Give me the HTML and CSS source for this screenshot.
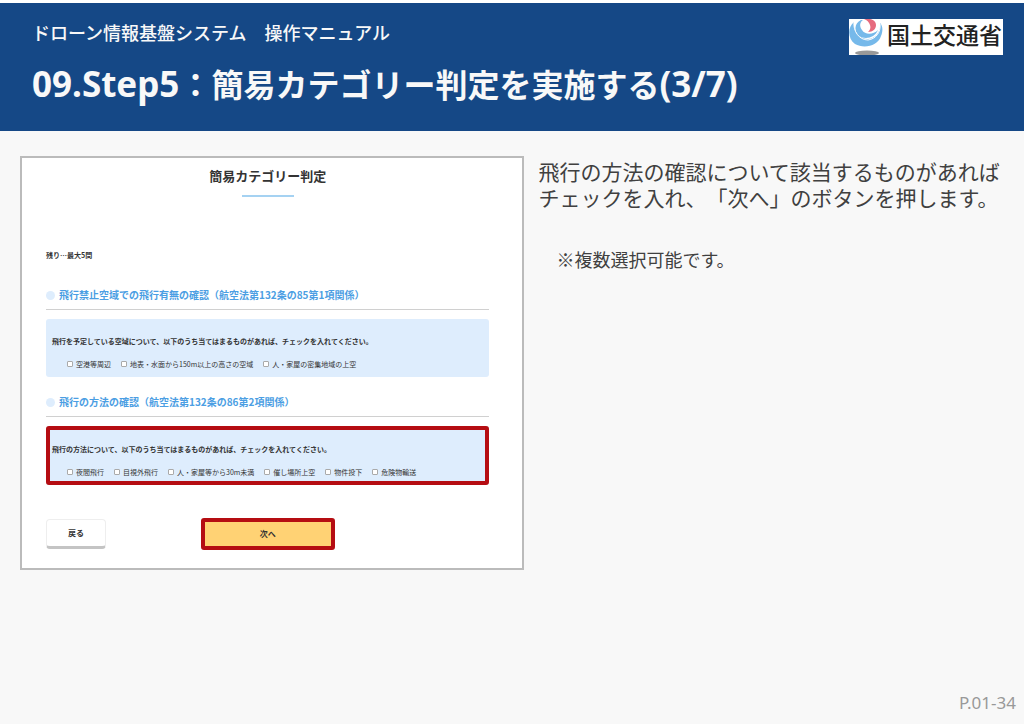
FILE: index.html
```html
<!DOCTYPE html>
<html lang="ja">
<head>
  <meta charset="UTF-8">
  <title>ドローン情報基盤システム 操作マニュアル</title>
  <link rel="stylesheet" href="styles.css">
</head>
<body>

  <header class="header">
    <div class="titles">
      <p class="manual-name">ドローン情報基盤システム　操作マニュアル</p>
      <h1><span class="latin">09.Step5</span>：簡易カテゴリー判定を実施する<span class="latin">(3/7)</span></h1>
    </div>
    <div class="logo">
      <svg viewBox="0 0 36 36" width="36" height="36" aria-hidden="true">
        <ellipse cx="18" cy="34" rx="12" ry="2.5" fill="#999"/>
        <path d="M5 3C-2 9-1 20 6 25C15 30 29 27 32 17C34 12 34 7 31 4C32 12 27 20 19 20C10 20 4 12 5 3Z" fill="#76b9ea"/>
        <path d="M12 1C5 4 5 13 10 17C16 21 26 19 29 11C24 16 16 16 13 11C10 7 11 3 14 1Z" fill="#76b9ea"/>
        <path d="M5 3C4 12 10 21 19 21C27 20 32 13 31 5" fill="none" stroke="#fff"/>
        <path d="M15 0C21-1 27 1 27 6C27 10 24 13 19 13C21 11 22 9 21 6C20 3 18 1 15 0Z" fill="#e66b7e"/>
      </svg>
      <span>国土交通省</span>
    </div>
  </header>

  <main class="content">
    <form class="screen">
      <h2>簡易カテゴリー判定</h2>
      <p class="remaining">残り…最大5問</p>

      <h3>飛行禁止空域での飛行有無の確認（航空法第132条の85第1項関係）</h3>
      <fieldset class="question">
        <legend>飛行を予定している空域について、以下のうち当てはまるものがあれば、チェックを入れてください。</legend>
        <div class="options">
          <label><input type="checkbox">空港等周辺</label>
          <label><input type="checkbox">地表・水面から150m以上の高さの空域</label>
          <label><input type="checkbox">人・家屋の密集地域の上空</label>
        </div>
      </fieldset>

      <h3>飛行の方法の確認（航空法第132条の86第2項関係）</h3>
      <fieldset class="question marked">
        <legend>飛行の方法について、以下のうち当てはまるものがあれば、チェックを入れてください。</legend>
        <div class="options">
          <label><input type="checkbox">夜間飛行</label>
          <label><input type="checkbox">目視外飛行</label>
          <label><input type="checkbox">人・家屋等から30m未満</label>
          <label><input type="checkbox">催し場所上空</label>
          <label><input type="checkbox">物件投下</label>
          <label><input type="checkbox">危険物輸送</label>
        </div>
      </fieldset>

      <div class="buttons">
        <button type="button" class="back">戻る</button>
        <button type="button" class="next">次へ</button>
      </div>
    </form>

    <div class="guide">
      <p>飛行の方法の確認について該当するものがあれば<br>チェックを入れ、「次へ」のボタンを押します。</p>
      <p class="note">※複数選択可能です。</p>
    </div>
  </main>

  <footer class="footer">P.01-34</footer>

</body>
</html>
```
FILE: styles.css
```css
* {
  box-sizing: border-box;
}

body {
  margin: 0;
  min-height: 100vh;
  display: flex;
  flex-direction: column;
  font-family: "Noto Sans CJK JP", sans-serif;
  text-spacing-trim: space-all;
  background: #f8f8f8;
  color: #404040;
}

h1, h2, h3, p {
  margin: 0;
}

/* header */
.header {
  display: flex;
  justify-content: space-between;
  align-items: flex-start;
  padding: 16px 21px 27px 32px;
  border-top: 3px solid #fff;
  background: #154886;
  background-clip: padding-box;
  color: #f8f8f8;
}

.manual-name {
  font-size: 18px;
  line-height: 26px;
  font-weight: 500;
}

.header h1 {
  margin-top: 18px;
  font-size: 32px;
  line-height: 40px;
  font-weight: bold;
}

.latin {
  font-family: "Noto Sans", sans-serif;
  font-size: 35px;
}

.logo {
  display: flex;
  height: 36px;
  padding-right: 1px;
  background: #fff;
  color: #222;
  font-size: 23px;
  line-height: 30px;
  font-weight: 500;
}

.logo svg {
  margin-right: 2px;
}

/* captured screen on the left, guide text on the right */
.content {
  flex: 1;
  display: grid;
  grid-template-columns: 13fr 12fr;
  gap: 14px;
  align-items: start;
  padding: 25px 20px;
}

.screen {
  padding: 9px 33px 18px 24px;
  border: 2px solid #bbb;
  background: #fff;
  color: #333;
}

.screen h2 {
  font-size: 13px;
  line-height: 18px;
  text-align: center;
}

.screen h2::after {
  content: "";
  display: block;
  width: 52px;
  height: 2px;
  margin: 10px auto 0;
  background: #a5d2f2;
}

.remaining {
  margin: 53px 0 27px;
  font-size: 7px;
  line-height: 10px;
  font-weight: bold;
}

.screen h3 {
  display: flex;
  align-items: center;
  gap: 4px;
  padding-bottom: 6px;
  border-bottom: 1px solid #d0d0d0;
  margin-bottom: 9px;
  color: #4b9ee3;
  font-size: 10px;
  line-height: 16px;
}

.screen h3::before {
  content: "";
  width: 9px;
  height: 9px;
  border-radius: 50%;
  background: #deedfd;
}

.question {
  margin: 0 0 17px;
  min-width: 0;
  padding: 17px 6px 8px;
  border: none;
  border-radius: 3px;
  background: #deedfd;
  font-size: 7px;
  line-height: 10px;
}

.question.marked {
  margin-bottom: 33px;
  padding: 14px 2px 4px;
  border: 4px solid #b50d12;
}

.question legend {
  float: left;
  padding: 0;
  font-weight: bold;
}

.options {
  clear: both;
  display: flex;
  flex-wrap: wrap;
  gap: 0 10px;
  padding: 13px 0 0 15px;
}

.options label {
  display: flex;
  align-items: center;
  gap: 3px;
}

.options input {
  appearance: none;
  width: 6px;
  height: 6px;
  margin: 0;
  border: 1px solid #aaa;
  border-radius: 1px;
  background: #fff;
}

.buttons {
  display: grid;
  grid-template-columns: 1fr 134px 1fr;
  align-items: center;
}

.buttons button {
  font-family: inherit;
  font-size: 8px;
  line-height: 20px;
  font-weight: bold;
  color: #333;
}

.back {
  width: 60px;
  height: 30px;
  padding: 0;
  border: 1px solid #eee;
  border-bottom: 3px solid #c4c4c4;
  border-radius: 4px;
  background: #fff;
}

.next {
  height: 32px;
  padding: 0;
  border: 4px solid #b50d12;
  border-radius: 3px;
  background: #ffd274;
}

.guide {
  padding-top: 2px;
  font-size: 21px;
  line-height: 26px;
}

.note {
  margin: 36px 0 0 18px;
  font-size: 18px;
}

.footer {
  padding: 0 8px 11px;
  color: #999;
  font-family: "Noto Sans", sans-serif;
  font-size: 17px;
  line-height: 20px;
  text-align: right;
}
```
